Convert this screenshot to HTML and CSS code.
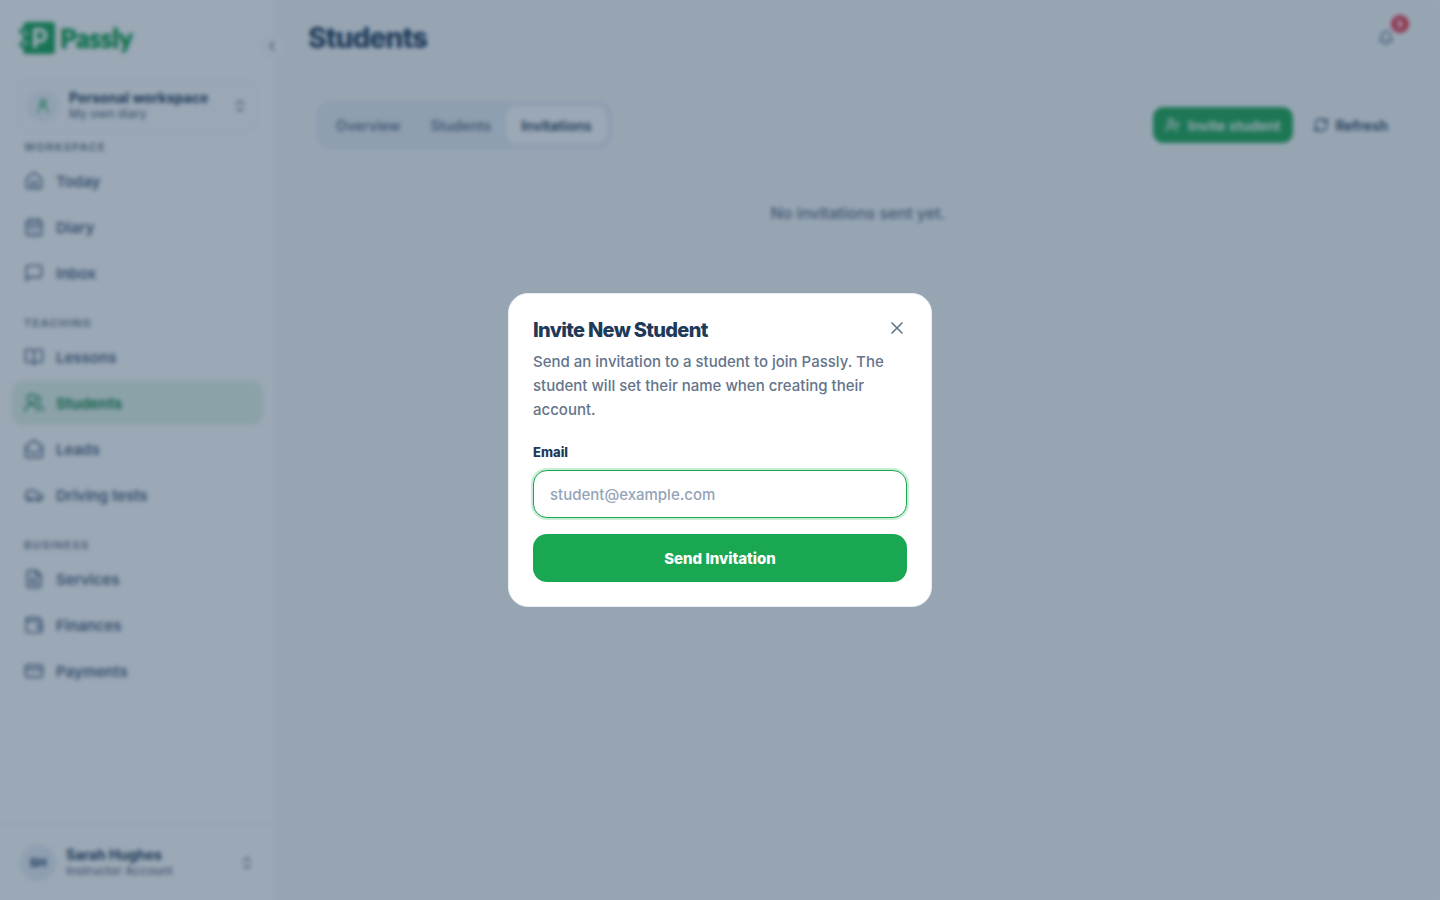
FILE: index.html
```html
<!DOCTYPE html>
<html lang="en">
<head>
  <meta charset="utf-8">
  <title>Students - Passly</title>
  <meta name="viewport" content="width=device-width, initial-scale=1">
  <link rel="stylesheet" href="styles.css">
</head>
<body>

  <div class="app">
    <aside class="sidebar">
      <a class="logo" href="#">
        <svg width="38" height="34" viewBox="0 0 38 34">
          <path fill="#12a150" d="M8 1h26a3 3 0 0 1 3 3v26a3 3 0 0 1-3 3H8a3 3 0 0 1-3-3l1-3-4-1-1-4 4-2v-6l-4-2 1-4 4-1-1-3a3 3 0 0 1 3-2z"/>
          <path fill="none" stroke="#fff" stroke-width="4" stroke-linejoin="round" d="M17 27V9h5a5 5 0 0 1 0 11h-5"/>
          <path fill="none" stroke="#fff" stroke-width="2" d="M5 11l5 2M5 23l5-2"/>
        </svg>
        <span>Passly</span>
      </a>
      <button class="collapse" aria-label="Collapse sidebar">
        <svg class="icon small" viewBox="0 0 24 24"><path d="m15 18-6-6 6-6"/></svg>
      </button>

      <button class="workspace">
        <span class="workspace-icon">
          <svg class="icon small" viewBox="0 0 24 24"><circle cx="12" cy="7" r="4"/><path d="M5 21v-1a7 7 0 0 1 14 0v1"/></svg>
        </span>
        <span class="who">
          <strong>Personal workspace</strong>
          <small>My own diary</small>
        </span>
        <svg class="icon small" viewBox="0 0 24 24"><path d="m7 15 5 5 5-5M7 9l5-5 5 5"/></svg>
      </button>

      <nav class="nav">
        <div class="nav-group">
          <h2>Workspace</h2>
          <a href="#"><svg class="icon" viewBox="0 0 24 24"><path d="M15 21v-8H9v8"/><path d="M3 10a2 2 0 0 1 .7-1.500l7-6a2 2 0 0 1 2.600 0l7 6A2 2 0 0 1 21 10v9a2 2 0 0 1-2 2H5a2 2 0 0 1-2-2z"/></svg>Today</a>
          <a href="#"><svg class="icon" viewBox="0 0 24 24"><rect x="3" y="4" width="18" height="18" rx="2"/><path d="M8 2v4M16 2v4M3 10h18M8 14h.01M12 14h.01M16 14h.01M8 18h.01M12 18h.01M16 18h.01"/></svg>Diary</a>
          <a href="#"><svg class="icon" viewBox="0 0 24 24"><path d="M21 15a2 2 0 0 1-2 2H7l-4 4V5a2 2 0 0 1 2-2h14a2 2 0 0 1 2 2z"/></svg>Inbox</a>
        </div>
        <div class="nav-group">
          <h2>Teaching</h2>
          <a href="#"><svg class="icon" viewBox="0 0 24 24"><path d="M12 7v14"/><path d="M3 18a1 1 0 0 1-1-1V4a1 1 0 0 1 1-1h5a4 4 0 0 1 4 4 4 4 0 0 1 4-4h5a1 1 0 0 1 1 1v13a1 1 0 0 1-1 1h-6a3 3 0 0 0-3 3 3 3 0 0 0-3-3z"/></svg>Lessons</a>
          <a href="#" class="active"><svg class="icon" viewBox="0 0 24 24"><circle cx="9" cy="7" r="5"/><path d="M1 22a8 8 0 0 1 16 0M16 3a5 5 0 0 1 1 9M18 15a7 7 0 0 1 5 6"/></svg>Students</a>
          <a href="#"><svg class="icon" viewBox="0 0 24 24"><path d="M22 10v10a2 2 0 0 1-2 2H4a2 2 0 0 1-2-2V10c0-.6.3-1.200.8-1.600l8-6a2 2 0 0 1 2.400 0l8 6c.5.4.8 1 .8 1.600z"/><path d="m22 11-8.500 6a2.500 2.500 0 0 1-3 0L2 11"/></svg>Leads</a>
          <a href="#"><svg class="icon" viewBox="0 0 24 24"><path d="M19 17h2c.6 0 1-.4 1-1v-3c0-.9-.7-1.700-1.500-1.900C18.700 10.600 16 10 16 10s-1.300-1.400-2.200-2.300c-.5-.4-1.100-.7-1.800-.7H5c-.6 0-1.100.4-1.400.9l-1.400 2.900A4 4 0 0 0 2 12v4c0 .6.4 1 1 1h2M9 17h6"/><circle cx="7" cy="17" r="2"/><circle cx="17" cy="17" r="2"/></svg>Driving tests</a>
        </div>
        <div class="nav-group">
          <h2>Business</h2>
          <a href="#"><svg class="icon" viewBox="0 0 24 24"><path d="M15 2H6a2 2 0 0 0-2 2v16a2 2 0 0 0 2 2h12a2 2 0 0 0 2-2V7z"/><path d="M14 2v4a2 2 0 0 0 2 2h4M8 9h2M8 13h8M8 17h8"/></svg>Services</a>
          <a href="#"><svg class="icon" viewBox="0 0 24 24"><path d="M19 7V4a1 1 0 0 0-1-1H5a2 2 0 0 0 0 4h15a1 1 0 0 1 1 1v4h-3a2 2 0 0 0 0 4h3a1 1 0 0 0 1-1v-2a1 1 0 0 0-1-1"/><path d="M3 5v14a2 2 0 0 0 2 2h15a1 1 0 0 0 1-1v-4"/></svg>Finances</a>
          <a href="#"><svg class="icon" viewBox="0 0 24 24"><rect x="2" y="5" width="20" height="14" rx="2"/><path d="M2 10h20"/></svg>Payments</a>
        </div>
      </nav>

      <button class="account">
        <span class="avatar">SH</span>
        <span class="who">
          <strong>Sarah Hughes</strong>
          <small>Instructor Account</small>
        </span>
        <svg class="icon small" viewBox="0 0 24 24"><path d="m7 15 5 5 5-5M7 9l5-5 5 5"/></svg>
      </button>
    </aside>

    <main class="main">
      <header class="topbar">
        <h1>Students</h1>
        <button class="bell" aria-label="Notifications">
          <svg class="icon small" viewBox="0 0 24 24"><path d="M10.300 21a2 2 0 0 0 3.400 0"/><path d="M3.300 15.300A1 1 0 0 0 4 17h16a1 1 0 0 0 .7-1.700C19.400 14 18 12.500 18 8A6 6 0 0 0 6 8c0 4.500-1.400 6-2.700 7.300"/></svg>
          <span class="badge">9</span>
        </button>
      </header>

      <div class="content">
        <div class="toolbar">
          <div class="tabs">
            <button>Overview</button>
            <button>Students</button>
            <button class="selected">Invitations</button>
          </div>
          <div class="actions">
            <button class="button primary">
              <svg class="icon small" viewBox="0 0 24 24"><circle cx="9" cy="7" r="4"/><path d="M2 21v-2a4 4 0 0 1 4-4h6a4 4 0 0 1 4 4v2M19 8v6M22 11h-6"/></svg>
              Invite student
            </button>
            <button class="button">
              <svg class="icon small" viewBox="0 0 24 24"><path d="M3 12a9 9 0 0 1 9-9 9.800 9.800 0 0 1 6.700 2.700L21 8"/><path d="M21 3v5h-5M21 12a9 9 0 0 1-9 9 9.800 9.800 0 0 1-6.700-2.700L3 16"/><path d="M8 16H3v5"/></svg>
              Refresh
            </button>
          </div>
        </div>
        <p class="empty">No invitations sent yet.</p>
      </div>
    </main>
  </div>

  <div class="overlay">
    <form class="modal" role="dialog" aria-labelledby="modalTitle">
      <div class="modal-head">
        <h2 id="modalTitle">Invite New Student</h2>
        <button type="button" class="close" aria-label="Close">
          <svg class="icon" viewBox="0 0 24 24"><path d="M18 6 6 18M6 6l12 12"/></svg>
        </button>
      </div>
      <p>Send an invitation to a student to join Passly. The student will set their name when creating their account.</p>
      <label for="email">Email</label>
      <input type="email" id="email" placeholder="student@example.com">
      <button type="submit" class="send">Send Invitation</button>
    </form>
  </div>

</body>
</html>
```

FILE: styles.css
```css
* { box-sizing: border-box; }
body {
  margin: 0;
  font-family: Inter, "Liberation Sans", sans-serif;
  font-size: 15px;
  color: #1e3a5a;
  background: #f8fafc;
}
h1, h2, p { margin: 0; }
a { color: inherit; text-decoration: none; }
button {
  font: inherit;
  color: inherit;
  border: 0;
  background: none;
  cursor: pointer;
}
.icon {
  width: 20px;
  height: 20px;
  flex: none;
  fill: none;
  stroke: currentColor;
  stroke-width: 2;
  stroke-linecap: round;
  stroke-linejoin: round;
}
.icon.small { width: 16px; height: 16px; }

.app { display: flex; min-height: 100vh; }

/* Sidebar */
.sidebar {
  position: relative;
  display: flex;
  flex-direction: column;
  flex: none;
  width: 276px;
  background: #fff;
  border-right: 1px solid #f8fafc;
}
.logo {
  display: flex;
  align-items: center;
  gap: 4px;
  padding: 22px 18px 0;
  height: 54px;
  font-family: Lato, Inter, sans-serif;
  font-size: 26px;
  font-weight: 900;
  color: #12a150;
  -webkit-text-stroke: 1px #12a150;
}
.collapse {
  position: absolute;
  top: 34px;
  right: -9px;
  display: flex;
  align-items: center;
  justify-content: center;
  width: 24px;
  height: 24px;
  padding: 0;
  border: 1px solid #f8fafc;
  border-radius: 50%;
  background: #fcfdfe;
  color: #64748b;
}
.workspace {
  display: flex;
  align-items: center;
  gap: 10px;
  height: 54px;
  margin: 25px 16px 6px;
  padding: 0 10px;
  text-align: left;
  border: 1px solid #f6f9fb;
  border-radius: 14px;
  background: #fdfeff;
}
.workspace-icon {
  display: flex;
  align-items: center;
  justify-content: center;
  width: 32px;
  height: 32px;
  border-radius: 50%;
  background: #eef3f8;
  color: #12a150;
}
.workspace > .icon, .account > .icon { color: #64748b; }
.who { flex: 1; display: flex; flex-direction: column; }
.who strong { font-size: 14px; line-height: 16px; font-weight: 700; }
.who small { font-size: 12px; line-height: 16px; font-weight: 500; color: #64748b; }
.nav {
  flex: 1;
  display: flex;
  flex-direction: column;
  gap: 20px;
  padding: 0 12px;
}
.nav-group { display: flex; flex-direction: column; gap: 2px; }
.nav-group h2 {
  padding: 0 12px;
  margin-bottom: 2px;
  font-size: 11px;
  line-height: 16px;
  font-weight: 600;
  letter-spacing: 0.12em;
  text-transform: uppercase;
  color: #64748b;
}
.nav-group a {
  display: flex;
  align-items: center;
  gap: 12px;
  height: 44px;
  padding: 0 12px;
  border-radius: 12px;
  font-weight: 600;
  color: #4a5f82;
}
.nav-group a.active { color: #15884a; background: #e3f4ea; font-weight: 700; }
.account {
  display: flex;
  align-items: center;
  gap: 10px;
  height: 76px;
  padding: 0 20px;
  text-align: left;
  border-top: 1px solid #eef2f7;
}
.avatar {
  display: flex;
  align-items: center;
  justify-content: center;
  width: 36px;
  height: 36px;
  border-radius: 50%;
  background: #e8eff8;
  font-size: 12px;
  font-weight: 700;
}

/* Main column */
.main { flex: 1; min-width: 0; }
.topbar {
  display: flex;
  align-items: center;
  justify-content: space-between;
  height: 77px;
  padding: 0 36px 0 32px;
  border-bottom: 1px solid #eef2f7;
}
.topbar h1 { font-size: 28px; font-weight: 800; letter-spacing: -0.03em; }
.bell {
  position: relative;
  display: flex;
  align-items: center;
  justify-content: center;
  width: 36px;
  height: 36px;
  padding: 0;
  color: #3d5272;
}
.badge {
  position: absolute;
  top: -5px;
  right: -5px;
  width: 18px;
  height: 18px;
  border-radius: 50%;
  background: #ef2f44;
  color: #fff;
  font-size: 10px;
  line-height: 18px;
  font-weight: 700;
}
.content { padding: 24px 40px; }
.toolbar { display: flex; align-items: center; justify-content: space-between; }
.tabs {
  display: flex;
  padding: 5px;
  border-radius: 14px;
  background: #e8eef5;
}
.tabs button {
  height: 38px;
  padding: 0 15px;
  border-radius: 10px;
  font-size: 14px;
  font-weight: 600;
  color: #64748b;
}
.tabs .selected { background: #fff; color: #1e3a5a; }
.actions { display: flex; gap: 8px; }
.button {
  display: flex;
  align-items: center;
  gap: 7px;
  height: 36px;
  padding: 0 11px;
  border: 1px solid #f1f5f9;
  border-radius: 10px;
  font-size: 14px;
  font-weight: 600;
}
.button.primary { color: #fff; background: #1aa751; border-color: #1aa751; }
.empty {
  margin-top: 52px;
  text-align: center;
  font-size: 16px;
  line-height: 24px;
  font-weight: 500;
  color: #5a6b84;
}

/* Invite dialog */
.overlay {
  position: fixed;
  inset: 0;
  display: flex;
  align-items: center;
  justify-content: center;
  background: rgba(33, 62, 91, 0.45);
  backdrop-filter: blur(2px);
}
.modal {
  display: flex;
  flex-direction: column;
  width: 424px;
  max-width: 100%;
  padding: 24px;
  border: 1px solid #e8eef4;
  border-radius: 20px;
  background: #fff;
}
.modal-head {
  display: flex;
  justify-content: space-between;
  align-items: center;
  height: 24px;
}
.modal h2 { font-size: 20px; line-height: 24px; font-weight: 800; letter-spacing: -0.035em; }
.close {
  display: flex;
  padding: 0;
  margin-bottom: 4px;
  color: #64748b;
}
.modal p {
  margin: 8px 0 20px;
  line-height: 24px;
  font-weight: 500;
  color: #64748b;
}
.modal label { font-size: 13px; line-height: 20px; font-weight: 800; }
.modal input {
  height: 48px;
  margin: 8px 0 16px;
  padding: 0 16px;
  border: 1px solid #1aa751;
  border-radius: 14px;
  outline: 0;
  box-shadow: 0 0 0 2px #c9edd7;
  font: inherit;
  font-weight: 500;
  color: inherit;
}
.modal input::placeholder { color: #94a3b8; }
.send {
  height: 48px;
  border-radius: 14px;
  background: #1aa751;
  color: #fff;
  font-weight: 800;
}
```
